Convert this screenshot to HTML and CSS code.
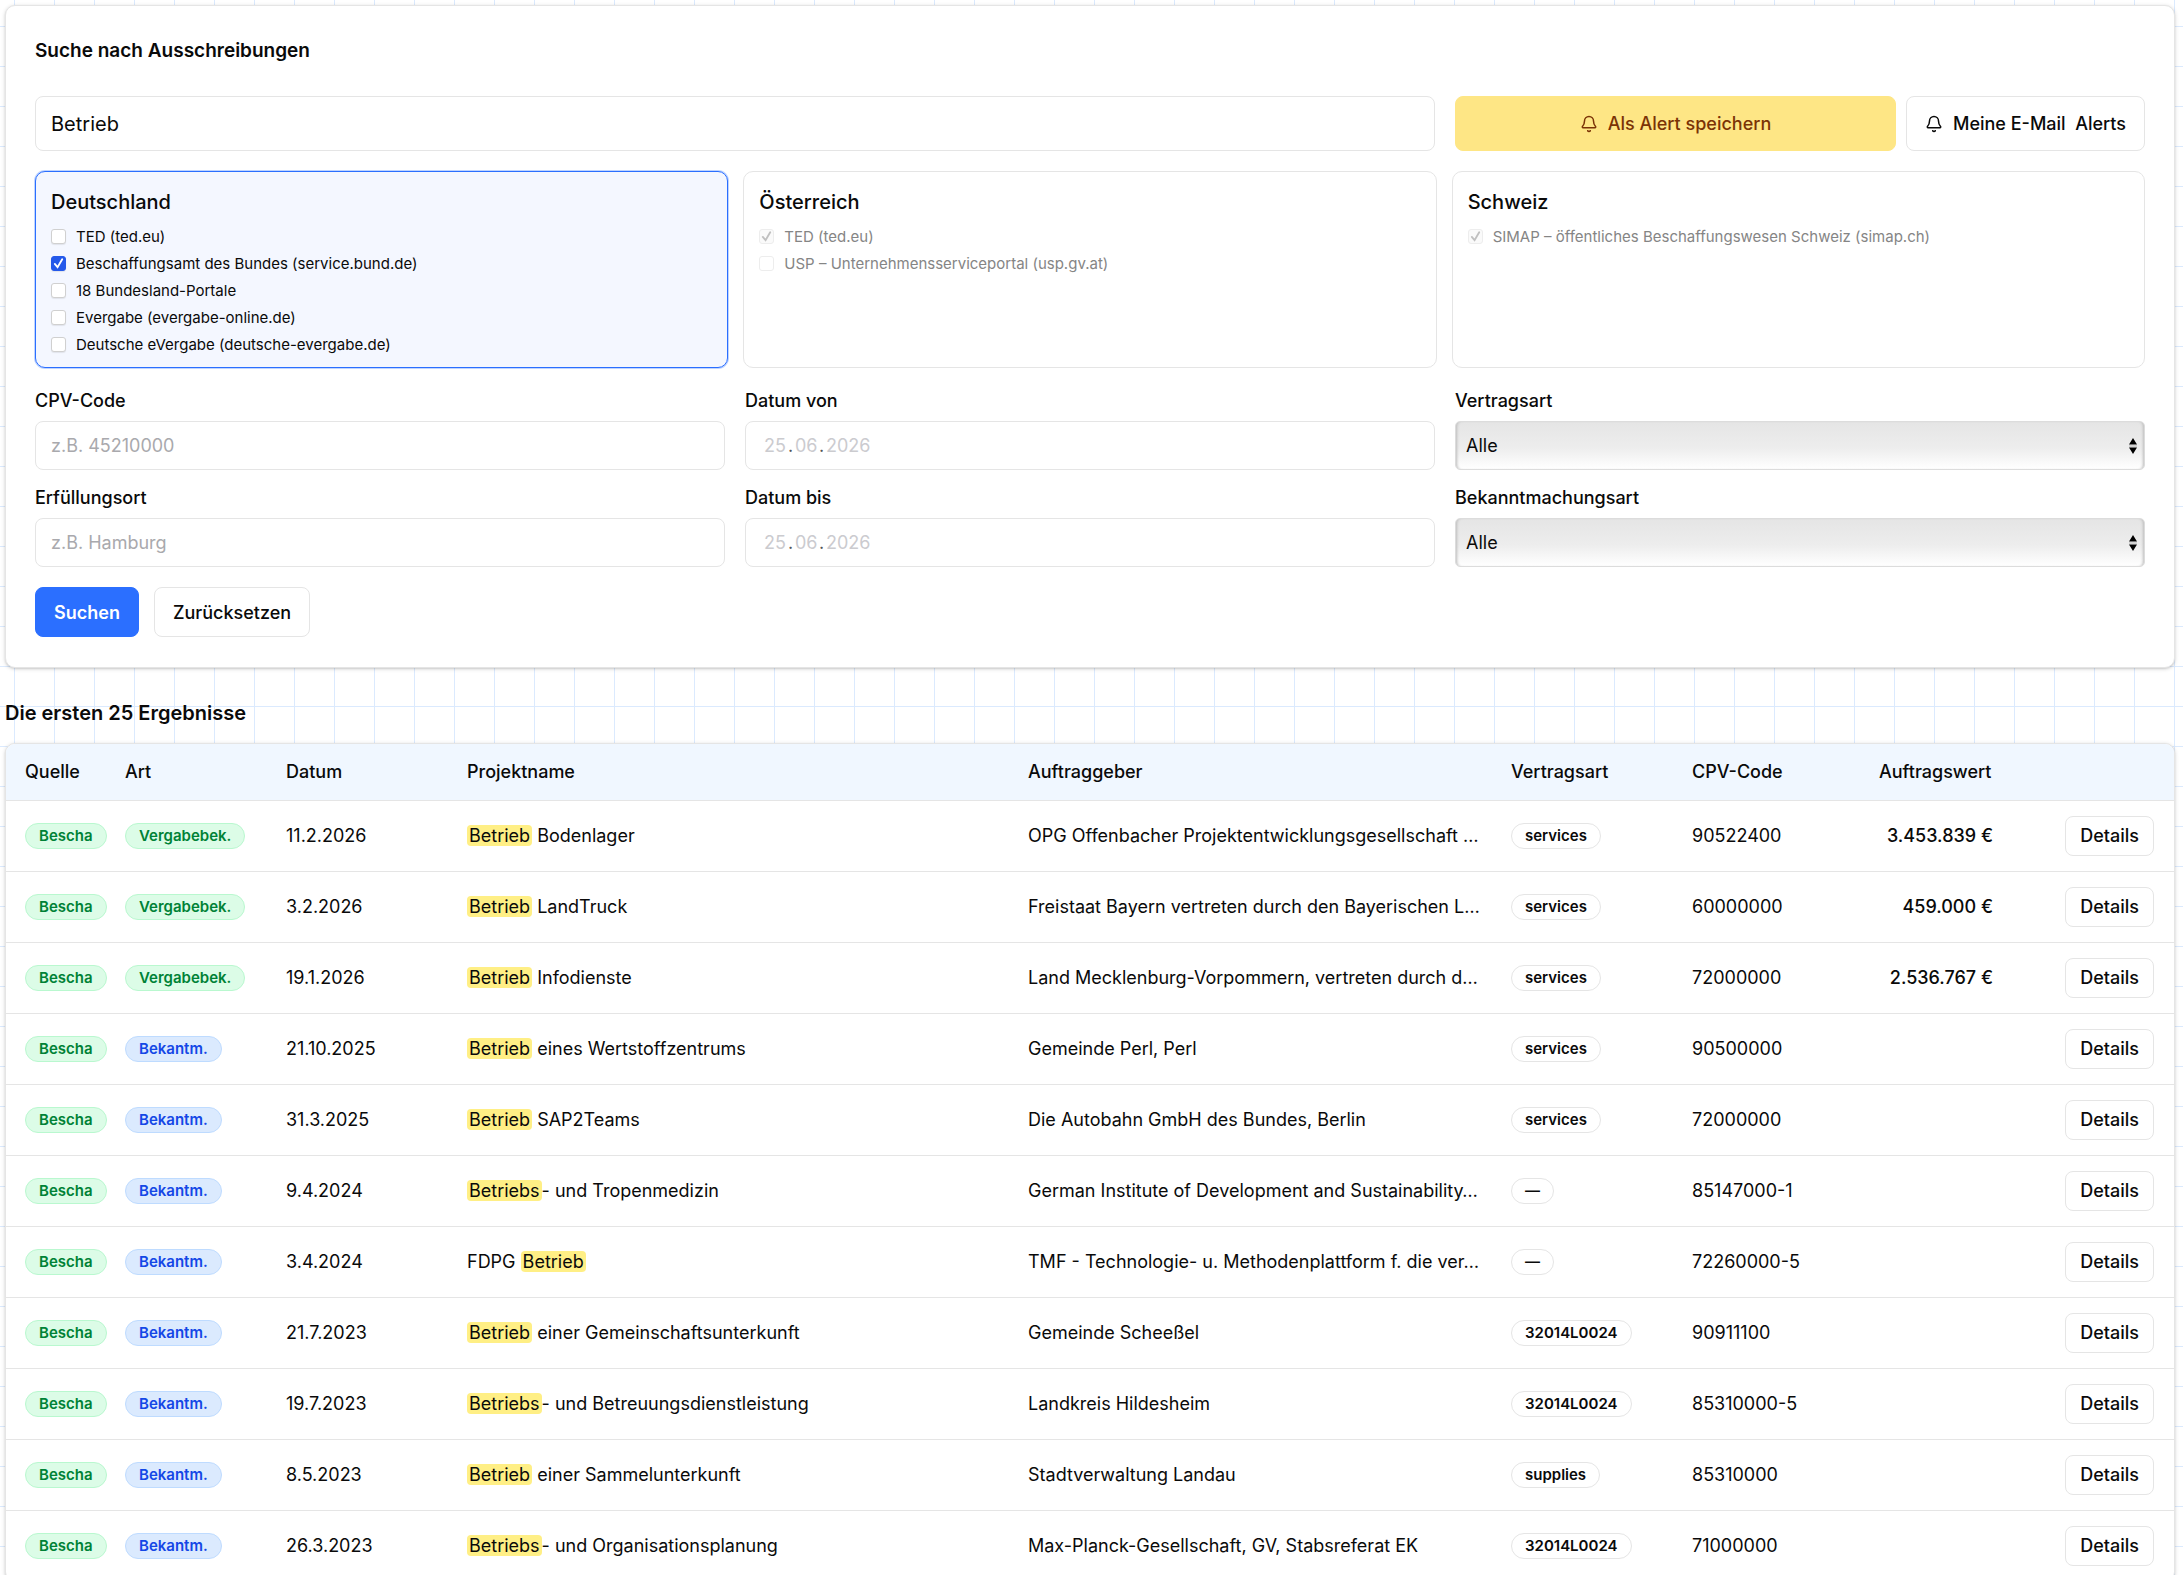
FILE: index.html
```html
<!DOCTYPE html>
<html lang="de">
<head>
  <meta charset="UTF-8">
  <meta name="viewport" content="width=device-width, initial-scale=1.0">
  <title>Suche nach Ausschreibungen</title>
  <link rel="stylesheet" href="styles.css">
</head>
<body>
  <form class="panel search">
    <h1 class="search-title">Suche nach Ausschreibungen</h1>

    <div class="top-row">
      <input class="field query" type="text" value="Betrieb" aria-label="Suchbegriff">
      <div class="alerts">
        <button type="button" class="btn btn-alert">
          <svg class="bell" viewBox="0 0 24 24" aria-hidden="true"><path d="M10.27 21a2 2 0 0 0 3.46 0"/><path d="M3.26 15.33A1 1 0 0 0 4 17h16a1 1 0 0 0 .74-1.67C19.41 13.96 18 12.5 18 8A6 6 0 0 0 6 8c0 4.5-1.41 5.96-2.74 7.33"/></svg>
          Als Alert speichern
        </button>
        <button type="button" class="btn">
          <svg class="bell" viewBox="0 0 24 24" aria-hidden="true"><path d="M10.27 21a2 2 0 0 0 3.46 0"/><path d="M3.26 15.33A1 1 0 0 0 4 17h16a1 1 0 0 0 .74-1.67C19.41 13.96 18 12.5 18 8A6 6 0 0 0 6 8c0 4.5-1.41 5.96-2.74 7.33"/></svg>
          Meine E-Mail&nbsp; Alerts
        </button>
      </div>
    </div>

    <!-- Länder und Quellen -->
    <div class="countries">
      <section class="country active">
        <h2>Deutschland</h2>
        <label><input type="checkbox"> TED (ted.eu)</label>
        <label><input type="checkbox" checked> Beschaffungsamt des Bundes (service.bund.de)</label>
        <label><input type="checkbox"> 18 Bundesland-Portale</label>
        <label><input type="checkbox"> Evergabe (evergabe-online.de)</label>
        <label><input type="checkbox"> Deutsche eVergabe (deutsche-evergabe.de)</label>
      </section>
      <section class="country">
        <h2>Österreich</h2>
        <label><input type="checkbox" checked disabled> TED (ted.eu)</label>
        <label><input type="checkbox" disabled> USP – Unternehmensserviceportal (usp.gv.at)</label>
      </section>
      <section class="country">
        <h2>Schweiz</h2>
        <label><input type="checkbox" checked disabled> SIMAP – öffentliches Beschaffungswesen Schweiz (simap.ch)</label>
      </section>
    </div>

    <!-- Filter -->
    <div class="filters">
      <div class="filter">
        <label for="cpv">CPV-Code</label>
        <input class="field" id="cpv" type="text" placeholder="z.B. 45210000">
      </div>
      <div class="filter">
        <label for="von">Datum von</label>
        <div class="field date">
          <input id="von" type="text" placeholder="25"><span>.</span><input type="text" placeholder="06" aria-label="Monat von"><span>.</span><input class="year" type="text" placeholder="2026" aria-label="Jahr von">
        </div>
      </div>
      <div class="filter">
        <label for="vertragsart">Vertragsart</label>
        <div class="select">
          <select id="vertragsart"><option>Alle</option></select>
          <svg class="arrows" viewBox="0 0 8 16" aria-hidden="true"><path d="M4 0l4 6.500H0zM4 16l4-6.500H0z"/><path d="M0 7.500h8v1H0z" fill="#bbb"/></svg>
        </div>
      </div>
      <div class="filter">
        <label for="ort">Erfüllungsort</label>
        <input class="field" id="ort" type="text" placeholder="z.B. Hamburg">
      </div>
      <div class="filter">
        <label for="bis">Datum bis</label>
        <div class="field date">
          <input id="bis" type="text" placeholder="25"><span>.</span><input type="text" placeholder="06" aria-label="Monat bis"><span>.</span><input class="year" type="text" placeholder="2026" aria-label="Jahr bis">
        </div>
      </div>
      <div class="filter">
        <label for="bekanntmachung">Bekanntmachungsart</label>
        <div class="select">
          <select id="bekanntmachung"><option>Alle</option></select>
          <svg class="arrows" viewBox="0 0 8 16" aria-hidden="true"><path d="M4 0l4 6.500H0zM4 16l4-6.500H0z"/><path d="M0 7.500h8v1H0z" fill="#bbb"/></svg>
        </div>
      </div>
    </div>

    <div class="actions">
      <button type="button" class="btn btn-primary">Suchen</button>
      <button type="reset" class="btn">Zurücksetzen</button>
    </div>
  </form>

  <h2 class="results-title">Die ersten 25 Ergebnisse</h2>

  <div class="panel results">
    <table>
      <colgroup>
        <col class="c-quelle"><col class="c-art"><col class="c-datum"><col class="c-projekt"><col class="c-geber"><col class="c-vertrag"><col class="c-cpv"><col class="c-wert"><col class="c-details">
      </colgroup>
      <thead>
        <tr><th>Quelle</th><th>Art</th><th>Datum</th><th>Projektname</th><th>Auftraggeber</th><th>Vertragsart</th><th>CPV-Code</th><th>Auftragswert</th><th></th></tr>
      </thead>
      <tbody>
        <tr><td><span class="badge green">Bescha</span></td><td><span class="badge green">Vergabebek.</span></td><td>11.2.2026</td><td><mark>Betrieb</mark> Bodenlager</td><td>OPG Offenbacher Projektentwicklungsgesellschaft …</td><td><span class="badge">services</span></td><td>90522400</td><td class="wert">3.453.839 €</td><td class="wert"><button class="btn btn-sm">Details</button></td></tr>
        <tr><td><span class="badge green">Bescha</span></td><td><span class="badge green">Vergabebek.</span></td><td>3.2.2026</td><td><mark>Betrieb</mark> LandTruck</td><td>Freistaat Bayern vertreten durch den Bayerischen L…</td><td><span class="badge">services</span></td><td>60000000</td><td class="wert">459.000 €</td><td class="wert"><button class="btn btn-sm">Details</button></td></tr>
        <tr><td><span class="badge green">Bescha</span></td><td><span class="badge green">Vergabebek.</span></td><td>19.1.2026</td><td><mark>Betrieb</mark> Infodienste</td><td>Land Mecklenburg-Vorpommern, vertreten durch d…</td><td><span class="badge">services</span></td><td>72000000</td><td class="wert">2.536.767 €</td><td class="wert"><button class="btn btn-sm">Details</button></td></tr>
        <tr><td><span class="badge green">Bescha</span></td><td><span class="badge blue">Bekantm.</span></td><td>21.10.2025</td><td><mark>Betrieb</mark> eines Wertstoffzentrums</td><td>Gemeinde Perl, Perl</td><td><span class="badge">services</span></td><td>90500000</td><td></td><td class="wert"><button class="btn btn-sm">Details</button></td></tr>
        <tr><td><span class="badge green">Bescha</span></td><td><span class="badge blue">Bekantm.</span></td><td>31.3.2025</td><td><mark>Betrieb</mark> SAP2Teams</td><td>Die Autobahn GmbH des Bundes, Berlin</td><td><span class="badge">services</span></td><td>72000000</td><td></td><td class="wert"><button class="btn btn-sm">Details</button></td></tr>
        <tr><td><span class="badge green">Bescha</span></td><td><span class="badge blue">Bekantm.</span></td><td>9.4.2024</td><td><mark>Betriebs</mark>- und Tropenmedizin</td><td>German Institute of Development and Sustainability…</td><td><span class="badge">—</span></td><td>85147000-1</td><td></td><td class="wert"><button class="btn btn-sm">Details</button></td></tr>
        <tr><td><span class="badge green">Bescha</span></td><td><span class="badge blue">Bekantm.</span></td><td>3.4.2024</td><td>FDPG <mark>Betrieb</mark></td><td>TMF - Technologie- u. Methodenplattform f. die ver…</td><td><span class="badge">—</span></td><td>72260000-5</td><td></td><td class="wert"><button class="btn btn-sm">Details</button></td></tr>
        <tr><td><span class="badge green">Bescha</span></td><td><span class="badge blue">Bekantm.</span></td><td>21.7.2023</td><td><mark>Betrieb</mark> einer Gemeinschaftsunterkunft</td><td>Gemeinde Scheeßel</td><td><span class="badge">32014L0024</span></td><td>90911100</td><td></td><td class="wert"><button class="btn btn-sm">Details</button></td></tr>
        <tr><td><span class="badge green">Bescha</span></td><td><span class="badge blue">Bekantm.</span></td><td>19.7.2023</td><td><mark>Betriebs</mark>- und Betreuungsdienstleistung</td><td>Landkreis Hildesheim</td><td><span class="badge">32014L0024</span></td><td>85310000-5</td><td></td><td class="wert"><button class="btn btn-sm">Details</button></td></tr>
        <tr><td><span class="badge green">Bescha</span></td><td><span class="badge blue">Bekantm.</span></td><td>8.5.2023</td><td><mark>Betrieb</mark> einer Sammelunterkunft</td><td>Stadtverwaltung Landau</td><td><span class="badge">supplies</span></td><td>85310000</td><td></td><td class="wert"><button class="btn btn-sm">Details</button></td></tr>
        <tr><td><span class="badge green">Bescha</span></td><td><span class="badge blue">Bekantm.</span></td><td>26.3.2023</td><td><mark>Betriebs</mark>- und Organisationsplanung</td><td>Max-Planck-Gesellschaft, GV, Stabsreferat EK</td><td><span class="badge">32014L0024</span></td><td>71000000</td><td></td><td class="wert"><button class="btn btn-sm">Details</button></td></tr>
      </tbody>
    </table>
  </div>
</body>
</html>
```

FILE: styles.css
```css
* { box-sizing: border-box; }
html { overflow: hidden; }
body {
  margin: 0;
  padding: 5px 8px 0 5px;
  font-family: Inter, "Liberation Sans", sans-serif;
  font-size: 18px;
  line-height: 25px;
  color: #0a0a0a;
  background-color: #fff;
  background-image:
    linear-gradient(to right, #dbeafe 1px, transparent 1px),
    linear-gradient(to bottom, #dbeafe 1px, transparent 1px);
  background-size: 40px 40px;
  background-position: 14px 26px;
}
h1, h2 { margin: 0; }
input, select, button { font: inherit; color: inherit; }

.panel {
  background: #fff;
  border: 1px solid #e5e5e5;
  border-radius: 10px;
  box-shadow: 0 1px 4px rgba(0,0,0,0.15), 0 1px 2px rgba(0,0,0,0.1);
}

/* Suche */
.search {
  display: flex;
  flex-direction: column;
  gap: 20px;
  padding: 29px 29px 30px;
}
.search-title {
  font-size: 19px;
  font-weight: 600;
  line-height: 32px;
  margin-bottom: 9px;
}
.top-row, .filters {
  display: grid;
  grid-template-columns: repeat(3, 1fr);
  gap: 15px 20px;
}
.field {
  width: 100%;
  height: 49px;
  padding: 0 15px;
  border: 1px solid #e5e5e5;
  border-radius: 8px;
  background: #fff;
}
.field::placeholder { color: #a9a9ad; opacity: 1; }
.query {
  grid-column: span 2;
  height: 55px;
  font-size: 20px;
}
.date {
  display: flex;
  align-items: center;
  padding: 0 18px;
}
.date input {
  width: 24px;
  padding: 0;
  border: 0;
  background: none;
}
.date .year { width: 48px; }
.date span {
  width: 7px;
  color: #555;
}
.date input::placeholder { color: #cbcbcf; opacity: 1; }
.alerts { display: flex; gap: 10px; }
.alerts .btn { height: 55px; }

.btn {
  display: inline-flex;
  align-items: center;
  justify-content: center;
  gap: 10px;
  height: 50px;
  padding: 0 18px;
  font-weight: 500;
  background: #fff;
  border: 1px solid #e5e5e5;
  border-radius: 8px;
  white-space: nowrap;
}
.btn-alert {
  flex: 1;
  color: #7b3306;
  background: #fee685;
  border-color: #fee685;
}
.btn-primary {
  color: #fff;
  background: #2b6fff;
  border-color: #2b6fff;
  font-weight: 600;
}
.btn-sm { height: 40px; padding: 0 14px; }
.bell {
  width: 18px;
  height: 18px;
  fill: none;
  stroke: currentColor;
  stroke-width: 2;
  stroke-linecap: round;
  stroke-linejoin: round;
}

.countries {
  display: grid;
  grid-template-columns: repeat(3, 1fr);
  gap: 15px;
}
.country {
  padding: 15px 15px 9px;
  border: 1px solid #e5e5e5;
  border-radius: 10px;
}
.country.active {
  background: #f4f7ff;
  border-color: #2b6fff;
  box-shadow: 0 0 0 1px #bfd4ff;
}
.country h2 {
  font-size: 20px;
  font-weight: 500;
  line-height: 30px;
  margin-bottom: 6px;
}
.country label {
  display: flex;
  align-items: center;
  gap: 10px;
  font-size: 15px;
  line-height: 21px;
  padding: 3px 0;
}
.country label:has(:disabled) { color: #858585; }
.country input {
  appearance: none;
  width: 15px;
  height: 15px;
  margin: 0;
  background: #fff center / 13px 13px no-repeat;
  border: 1px solid #d0d0d0;
  border-radius: 3px;
  box-shadow: 0 1px 1px rgba(0,0,0,0.08);
}
.country input:checked {
  background-color: #2459ea;
  background-image: url('data:image/svg+xml,<svg xmlns="http://www.w3.org/2000/svg" viewBox="0 0 14 14"><path d="M3 7.5l3 3.5 5-8.5" fill="none" stroke="white" stroke-width="2" stroke-linecap="round"/></svg>');
  border-color: #2459ea;
}
.country input:disabled {
  border-color: #ededed;
  box-shadow: none;
}
.country input:checked:disabled {
  background-color: #fafafa;
  background-image: url('data:image/svg+xml,<svg xmlns="http://www.w3.org/2000/svg" viewBox="0 0 14 14"><path d="M3 7.5l3 3.5 5-8.5" fill="none" stroke="silver" stroke-width="2" stroke-linecap="round"/></svg>');
}

.filter label {
  display: block;
  font-weight: 500;
  margin-bottom: 8px;
}
.select { position: relative; }
.select select {
  appearance: none;
  display: block;
  width: 100%;
  height: 49px;
  padding: 0 10px;
  border: 1px solid #dcdcdc;
  border-radius: 5px;
  background: linear-gradient(#e5e5e5, #ededed 55%, #fff);
  box-shadow: inset 3px 0 3px -2px #bbb, inset -3px 0 3px -2px #bbb;
}
.arrows {
  position: absolute;
  right: 8px;
  top: 17px;
  width: 8px;
  height: 16px;
}
.actions { display: flex; gap: 15px; }

/* Ergebnisse */
.results-title {
  font-size: 20px;
  font-weight: 600;
  line-height: 30px;
  margin: 30px 0 15px;
}
.results { overflow: hidden; }
table {
  width: 100%;
  table-layout: fixed;
  border-collapse: collapse;
}
.c-quelle { width: 100px; }
.c-art { width: 161px; }
.c-datum { width: 181px; }
.c-geber { width: 483px; }
.c-vertrag { width: 181px; }
.c-cpv { width: 187px; }
.c-wert { width: 153px; }
.c-details { width: 161px; }
th, td {
  padding: 0 0 0 19px;
  text-align: left;
  white-space: nowrap;
}
th {
  height: 56px;
  font-weight: 500;
  background: #f0f7ff;
}
td {
  height: 71px;
  border-top: 1px solid #e5e5e5;
}
.wert {
  padding: 0 20px 0 0;
  text-align: right;
  font-weight: 500;
}
mark {
  padding: 0 2px;
  color: inherit;
  background: #ffef85;
  border-radius: 4px;
}
.badge {
  display: inline-block;
  padding: 0 13px;
  font-size: 15px;
  font-weight: 600;
  line-height: 24px;
  vertical-align: middle;
  border: 1px solid #e5e5e5;
  border-radius: 13px;
}
.badge.green {
  color: #008236;
  background: #dcfce7;
  border-color: #b9f8cf;
}
.badge.blue {
  color: #1447e6;
  background: #dbeafe;
  border-color: #bedbff;
}
```
